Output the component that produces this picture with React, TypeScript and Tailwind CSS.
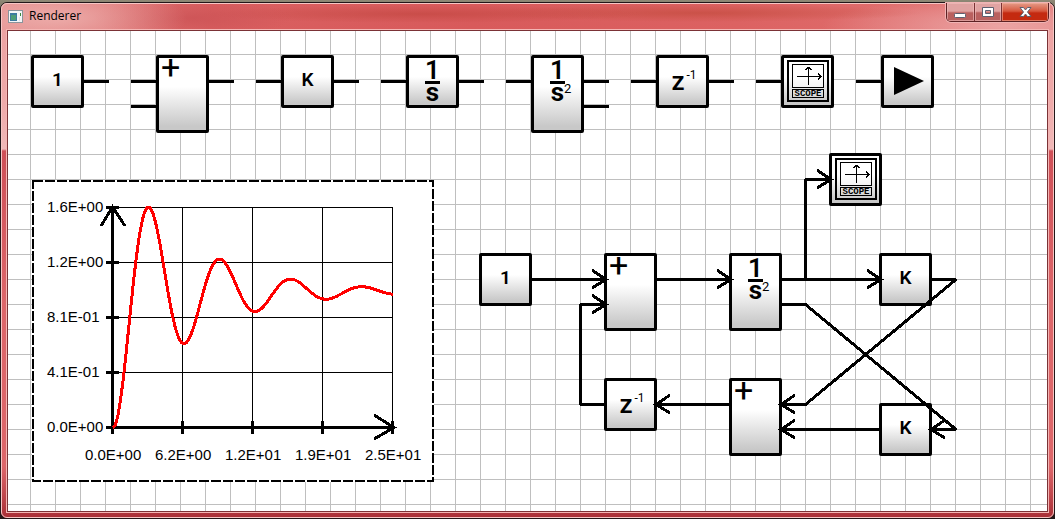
import type { ReactNode } from "react";

type BlockKind = "one" | "sum" | "gain" | "integrator" | "doubleIntegrator" | "delay" | "scope" | "play";
type BlockData = { kind: BlockKind; x: number; y: number };

const blocks: BlockData[] = [
  { kind: "one", x: 23, y: 24 },
  { kind: "sum", x: 148, y: 24 },
  { kind: "gain", x: 273, y: 24 },
  { kind: "integrator", x: 398, y: 24 },
  { kind: "doubleIntegrator", x: 523, y: 24 },
  { kind: "delay", x: 648, y: 24 },
  { kind: "scope", x: 773, y: 24 },
  { kind: "play", x: 873, y: 24 },
  { kind: "scope", x: 821, y: 122 },
  { kind: "one", x: 471, y: 222 },
  { kind: "sum", x: 596, y: 222 },
  { kind: "doubleIntegrator", x: 721, y: 222 },
  { kind: "gain", x: 871, y: 222 },
  { kind: "delay", x: 596, y: 347 },
  { kind: "sum", x: 721, y: 347 },
  { kind: "gain", x: 871, y: 372 },
];

const stubs = [
  [76, 50], [123, 50], [123, 75], [201, 50], [248, 50], [326, 50], [373, 50], [451, 50],
  [498, 50], [576, 50], [576, 75], [623, 50], [701, 50], [748, 50], [848, 50],
];

const wires = [
  "M523 248.5H597.5",
  "M648 248.5H722.5",
  "M773 248.5H872.5",
  "M797.5 248.5V148.5H822.5",
  "M773 273.5H797.5L948 398.5H922.5",
  "M923 248.5H948L797.5 373.5H772.5",
  "M872 398.5H772.5",
  "M722 373.5H647.5",
  "M597 373.5H572.5V273.5H597.5",
];

const rightHeads = [[598, 248], [598, 273], [723, 248], [873, 248], [823, 148]];
const leftHeads = [[648, 373], [773, 373], [773, 398], [923, 398]];

function Wires() {
  return (
    <svg className="pointer-events-none absolute top-0 left-0" width="1039" height="480" fill="none" stroke="#000" strokeWidth="3" shapeRendering="crispEdges" aria-hidden="true">
      {stubs.map(([x, y]) => (
        <path key={`${x}-${y}`} d={`M${x} ${y + 0.5}h25`} />
      ))}
      {wires.map((d) => (
        <path key={d} d={d} strokeLinejoin="bevel" />
      ))}
      {rightHeads.map(([x, y]) => (
        <path key={`r${x}-${y}`} d={`M${x - 14} ${y - 9}L${x} ${y + 0.5}L${x - 14} ${y + 9}`} />
      ))}
      {leftHeads.map(([x, y]) => (
        <path key={`l${x}-${y}`} d={`M${x + 14} ${y - 9}L${x} ${y + 0.5}L${x + 14} ${y + 9}`} />
      ))}
    </svg>
  );
}

function ScopeFace() {
  return (
    <div className="mt-0.5 ml-[3px] flex h-[42px] w-[42px] flex-col items-center gap-px border-2 border-black pt-0.5">
      <svg className="block h-6 w-8 shrink-0 border border-black bg-white/50" viewBox="0 0 30 22" fill="none" stroke="#000" shapeRendering="crispEdges" aria-hidden="true">
        <path d="M4 11.500H29M15.500 2V20" />
        <path d="M12 4.500H14M13 3.500H15M14 2.500H17M16 3.500H18M17 4.500H19" />
        <path d="M25.500 8V10M26.500 9V11M27.500 10V13M26.500 12V14M25.500 13V15" />
      </svg>
      <span className="h-[9px] w-8 shrink-0 border border-black text-center font-['Liberation_Mono',monospace] text-[9px] leading-[8px] font-bold">
        SCOPE
      </span>
    </div>
  );
}

function Fraction({ squared = false }: { squared?: boolean }) {
  return (
    <div className="relative mt-0.5 flex w-full flex-col items-center">
      <span className="h-[21px] text-[26px] leading-5 font-semibold">1</span>
      <span className="h-[3px] w-[15px] bg-black" />
      <span className="h-5 text-[26px] leading-4 font-bold">s</span>
      {squared && <sup className="absolute top-[23px] left-[30px] text-[13px] leading-3">2</sup>}
    </div>
  );
}

const faces: Record<BlockKind, ReactNode> = {
  one: <span className="w-full pt-[11px] text-center text-[19px] leading-[22px] font-semibold">1</span>,
  gain: <span className="w-full pt-[11px] text-center text-[19px] leading-[22px] font-semibold">K</span>,
  sum: <span className="pl-0.5 text-[34px] leading-[18px]">+</span>,
  integrator: <Fraction />,
  doubleIntegrator: <Fraction squared />,
  delay: (
    <span className="flex w-full justify-center gap-0.5 pt-[11px] pl-[3px]">
      <span className="text-[26px] leading-6 font-medium">z</span>
      <sup className="top-0 text-[12px] leading-3">-1</sup>
    </span>
  ),
  scope: <ScopeFace />,
  play: (
    <svg className="mt-[9px] ml-2.5 block" width="30" height="28" viewBox="0 0 30 28" role="img" aria-label="Play">
      <path d="M0 0L30 14L0 28Z" />
    </svg>
  ),
};

function Block({ kind, x, y }: BlockData) {
  const tall = kind === "sum" || kind === "doubleIntegrator";
  return (
    <div
      className={`absolute flex w-[53px] items-start rounded-[2px] border-[3px] border-black bg-linear-to-b from-white from-40% to-[#c8c8c8] to-95% font-[Roboto,sans-serif] text-black ${tall ? "h-[78px]" : "h-[53px]"}`}
      style={{ left: x, top: y }}
    >
      {faces[kind]}
    </div>
  );
}

const xLabels = ["0.0E+00", "6.2E+00", "1.2E+01", "1.9E+01", "2.5E+01"];
const yLabels = ["1.6E+00", "1.2E+00", "8.1E-01", "4.1E-01", "0.0E+00"];

const halfPeriod = 35.5;
const omega = Math.PI / halfPeriod;
const decay = -Math.log(0.62) / halfPeriod;
const response = Array.from({ length: 281 }, (_, t) => {
  const level = 136 * (1 - Math.exp(-decay * t) * (Math.cos(omega * t) + (decay / omega) * Math.sin(omega * t)));
  return `${81 + t},${(247.5 - level).toFixed(1)}`;
}).join(" ");

function Chart() {
  return (
    <svg className="absolute top-[149px] left-6 bg-white" width="402" height="302" role="img" aria-label="Step response">
      <g fill="none" stroke="#000" shapeRendering="crispEdges">
        <rect x="1" y="1" width="400" height="300" strokeWidth="2" strokeDasharray="10 2" />
        {[0, 1, 2, 3].map((i) => (
          <path key={i} d={`M80 ${27.5 + 55 * i}H361M${150.5 + 70 * i} 27V247`} />
        ))}
        {[0, 1, 2, 3, 4].map((i) => (
          <path key={i} strokeWidth="3" d={`M74 ${27.5 + 55 * i}H87M${80.5 + 70 * i} 241V254`} />
        ))}
        <path strokeWidth="3" d="M80.5 27V247.5H361M69 46L80.5 27L93 46M342 235L362 247.5L342 259" />
      </g>
      <polyline points={response} fill="none" stroke="#f00" strokeWidth="3" strokeLinejoin="round" shapeRendering="crispEdges" />
      <g className="font-['Liberation_Sans',Arial,sans-serif] text-[15px]">
        {yLabels.map((label, i) => (
          <text key={label} x="15" y={32 + 55 * i}>{label}</text>
        ))}
        {xLabels.map((label, i) => (
          <text key={label} x={53 + 70 * i} y="280">{label}</text>
        ))}
      </g>
    </svg>
  );
}

function TitleBar() {
  return (
    <header className="flex h-[25px] shrink-0 items-start justify-between pl-0.5">
      <div className="flex items-center gap-[6px] pt-1">
        <svg width="15" height="13" viewBox="0 0 15 13" aria-hidden="true">
          <rect x=".5" y=".5" width="14" height="12" fill="#f4f6f8" stroke="#8b949c" />
          <rect x="2" y="3" width="7" height="8" fill="#3c7ba0" />
          <rect x="3" y="5" width="5" height="5" fill="#4d9d78" />
          <path d="M12.5 3V6" stroke="#3c8a3c" />
          <path d="M11.5 7V11" stroke="#dfe3e8" />
        </svg>
        <h1 className="font-['Open_Sans','Noto_Sans',sans-serif] text-[12px] leading-4 text-black">Renderer</h1>
      </div>
      <div className="-mt-px flex h-[19px] overflow-hidden rounded-b-[5px] border border-t-0 border-[#5c2224] shadow-[0_0_0_1px_#f0b4b4]">
        <button type="button" aria-label="Minimize" className="flex w-7 items-center justify-center border-r border-[#7a3234] bg-linear-to-b from-[#e0a3a2] from-45% to-[#b9605f] to-55% inset-ring inset-ring-[#f0c0be]/60">
          <svg width="13" height="14" viewBox="0 0 13 14" aria-hidden="true">
            <rect x=".5" y="8.5" width="11" height="4" rx="1" fill="#fff" stroke="#5d5f70" />
          </svg>
        </button>
        <button type="button" aria-label="Maximize" className="flex w-[27px] items-center justify-center border-r border-[#7a3234] bg-linear-to-b from-[#e0a3a2] from-45% to-[#b9605f] to-55% inset-ring inset-ring-[#f0c0be]/60">
          <svg width="13" height="12" viewBox="0 0 13 12" aria-hidden="true">
            <path fillRule="evenodd" d="M.5 1.5h11v9H.5zM3.500 4.500v3h5v-3z" fill="#fff" stroke="#5d5f70" />
          </svg>
        </button>
        <button type="button" aria-label="Close" className="flex w-[46px] items-center justify-center bg-linear-to-b from-[#e39a88] from-0% via-[#d6573d] via-45% to-[#c42a10] to-55% inset-ring inset-ring-[#f3b09c]/60">
          <svg width="13" height="12" viewBox="0 0 13 12" aria-hidden="true">
            <path d="M1 1.500H4.500L6.500 4L8.500 1.500H12L8.500 6L12 10.500H8.500L6.500 8L4.500 10.500H1L4.500 6Z" fill="#fff" stroke="#5d5f70" />
          </svg>
        </button>
      </div>
    </header>
  );
}

export default function App() {
  return (
    <div className="flex min-h-screen w-full flex-col bg-linear-to-b from-[#8f8976] from-0% to-[#201818] to-10% pt-0.5">
      <div className="flex grow flex-col rounded-[7px] border border-[#221719] bg-[linear-gradient(to_bottom,#eca0a0_0px,#efaaaa_100px,#f0b8b8_146px,#cf5058_148px,#dd666a_300px,#dd666a_90%,#a92f36_100%)]">
        <div className="flex grow flex-col rounded-[6px] border border-[#f6c6c4] bg-[radial-gradient(ellipse_130px_34px_at_55px_14px,#efb5b2cc,transparent),radial-gradient(ellipse_100px_20px_at_190px_14px,#c94f52aa,transparent),radial-gradient(ellipse_220px_9px_at_420px_10px,#c24640aa,transparent),radial-gradient(ellipse_220px_9px_at_700px_9px,#c24a3caa,transparent),radial-gradient(ellipse_180px_30px_at_1000px_22px,#eeb0b0cc,transparent),linear-gradient(to_right,#e38d8d,#d95f60_20%,#d85a5b_45%,#dc6262_70%,#e27776)] bg-[size:100%_26px] bg-no-repeat px-1 pb-1">
          <TitleBar />
          <main className="flex grow flex-col border border-[#f4b6b4]">
            <div className="relative grow overflow-hidden border border-[#7b3236] bg-white">
              <div className="absolute inset-0 bg-[linear-gradient(to_right,#bfbfbf_1px,transparent_1px),linear-gradient(to_bottom,#bfbfbf_1px,transparent_1px)] bg-[size:25px_25px] bg-[position:22px_23px]">
                <Chart />
                {blocks.map((block) => (
                  <Block key={`${block.x}-${block.y}`} {...block} />
                ))}
                <Wires />
              </div>
            </div>
          </main>
        </div>
      </div>
    </div>
  );
}
